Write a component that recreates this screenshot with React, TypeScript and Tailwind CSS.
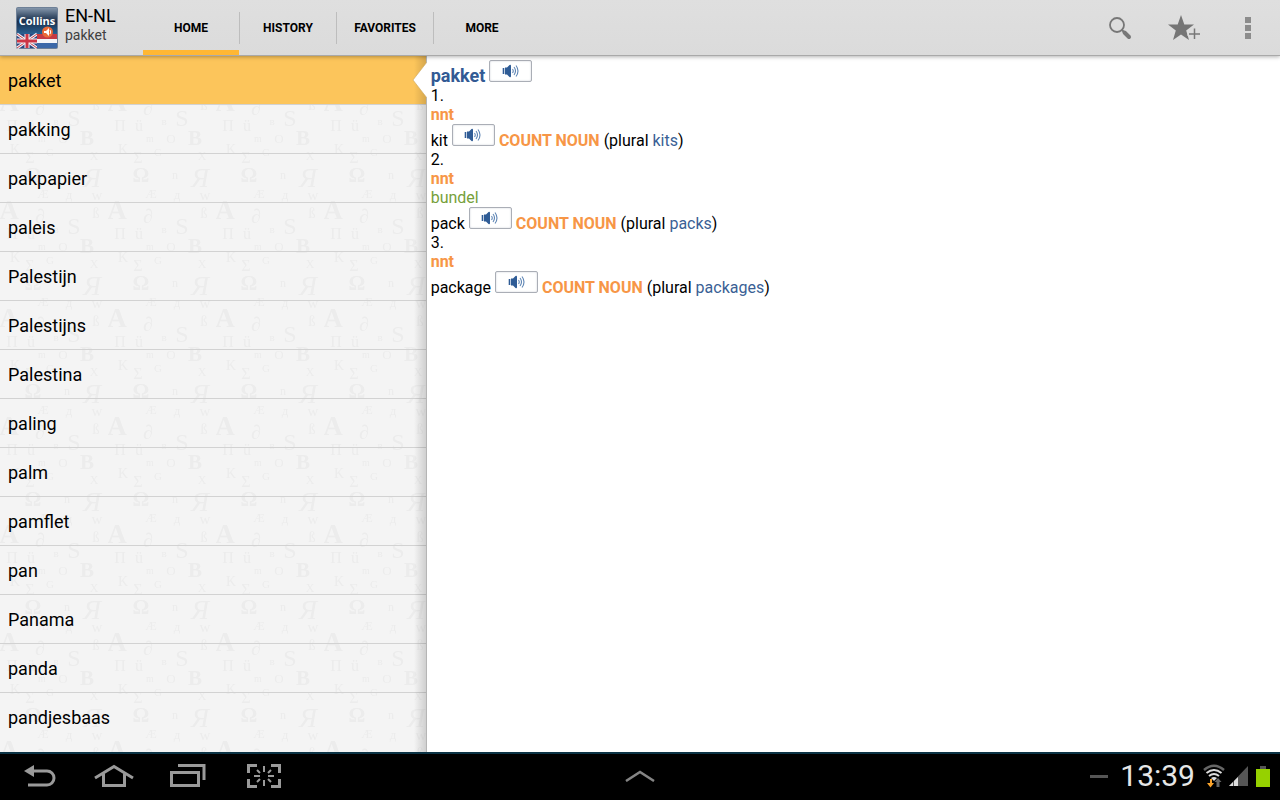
import { useState } from "react"

const tabs = ["Home", "History", "Favorites", "More"]

const words = [
  "pakket",
  "pakking",
  "pakpapier",
  "paleis",
  "Palestijn",
  "Palestijns",
  "Palestina",
  "paling",
  "palm",
  "pamflet",
  "pan",
  "Panama",
  "panda",
  "pandjesbaas",
]

const senses = [
  { hint: "", word: "kit", plural: "kits" },
  { hint: "bundel", word: "pack", plural: "packs" },
  { hint: "", word: "package", plural: "packages" },
]

// letters of the repeating 108px wallpaper tile
const letters = [
  { char: "A", x: 9, y: 55, size: 27, bold: true },
  { char: "∂", x: 40, y: 59, size: 20 },
  { char: "ß", x: 96, y: 54, size: 14 },
  { char: "S", x: 74, y: 70, size: 24 },
  { char: "в", x: 56, y: 69, size: 11 },
  { char: "Π", x: 12, y: 75, size: 16 },
  { char: "ü", x: 31, y: 75, size: 16 },
  { char: "m", x: 42, y: 86, size: 10 },
  { char: "O", x: 63, y: 87, size: 13 },
  { char: "B", x: 87, y: 89, size: 21, bold: true },
  { char: "K", x: 15, y: 98, size: 14 },
  { char: "Σ", x: 30, y: 107, size: 16 },
  { char: "G", x: 50, y: 100, size: 11 },
  { char: "X", x: 94, y: 104, size: 12 },
  { char: "Ω", x: 33, y: 18, size: 21, bold: true },
  { char: "Я", x: 92, y: 23, size: 27, italic: true },
  { char: "n", x: 67, y: 15, size: 12 },
  { char: "Æ", x: 43, y: 34, size: 13 },
  { char: "д", x: 69, y: 35, size: 13 },
  { char: "w", x: 97, y: 36, size: 15 },
]

function LetterPattern() {
  return (
    <svg className="pointer-events-none absolute inset-0 h-full w-full" aria-hidden="true">
      <defs>
        <pattern id="letters" width="108" height="108" patternUnits="userSpaceOnUse">
          {letters.map((l) => (
            <text
              key={l.char}
              x={l.x}
              y={l.y}
              fontSize={l.size}
              fontStyle={l.italic ? "italic" : "normal"}
              fontWeight={l.bold ? 700 : 400}
              fontFamily="'Liberation Serif', serif"
              textAnchor="middle"
              fill="#ececec"
            >
              {l.char}
            </text>
          ))}
        </pattern>
      </defs>
      <rect width="100%" height="100%" fill="url(#letters)" />
    </svg>
  )
}

function AppLogo() {
  return (
    <svg width="42" height="42" viewBox="0 0 42 42" role="img" aria-label="Collins">
      <defs>
        <linearGradient id="logoSky" x1="0" y1="0" x2="0" y2="1">
          <stop offset="0" stopColor="#8496ab" />
          <stop offset="0.3" stopColor="#3d526c" />
          <stop offset="0.5" stopColor="#1a304d" />
          <stop offset="1" stopColor="#2a6598" />
        </linearGradient>
      </defs>
      <rect width="42" height="42" rx="2" fill="#6e8097" />
      <rect x="1" y="1" width="40" height="27" rx="1" fill="url(#logoSky)" />
      <rect x="1" y="27" width="20" height="14" fill="#2c4580" />
      <path d="M1 27l20 14M21 27L1 41" stroke="#eef0f5" strokeWidth="3" />
      <path d="M1 27l20 14M21 27L1 41" stroke="#c8404b" strokeWidth="1" />
      <path d="M11 27v14M1 34h20" stroke="#f3f3f6" strokeWidth="5" />
      <path d="M11 27v14M1 34h20" stroke="#cc3645" strokeWidth="3" />
      <rect x="21" y="27" width="20" height="5" fill="#c63a45" />
      <rect x="21" y="32" width="20" height="4" fill="#f4f5f8" />
      <rect x="21" y="36" width="20" height="5" fill="#3c68a8" />
      <text x="21" y="18" textAnchor="middle" fontSize="11" fontWeight="700" fontFamily="'Open Sans', sans-serif" fill="#fff">
        Collins
      </text>
      <circle cx="31.500" cy="25" r="5.500" fill="#ea6a38" />
      <path d="M28 24h2l3-3v8l-3-3h-2z" fill="#fff" />
      <path d="M34 23q1.500 2 0 4" fill="none" stroke="#fff" />
    </svg>
  )
}

function SoundButton({ word }: { word: string }) {
  return (
    <button
      aria-label={`Play ${word}`}
      className="flex h-[22px] w-[43px] items-center justify-center self-start rounded-xs border border-[#aaaeb6] bg-white shadow-[inset_0_0_2px_#c8ccd4]"
    >
      <svg width="18" height="14" viewBox="0 0 18 14" fill="none" stroke="#5f86b5">
        <path d="M1.500 4v6" stroke="#2f5c96" strokeWidth="1.600" />
        <path d="M3 3.500h2L7.500 1q1.500-.8 1.500 1v10q0 1.800-1.500 1L5 10.500H3z" fill="#2f5c96" stroke="none" />
        <path d="M10.500 5q1.500 2 0 4M12 3q3 4 0 8M14 1.500q4 5.500 0 11" strokeWidth="1.100" />
      </svg>
    </button>
  )
}

function Header() {
  const [active, setActive] = useState("Home")

  return (
    <header className="relative z-10 flex h-14 items-stretch border-b border-[#a9a9a9] bg-gradient-to-b from-[#dfdfdf] to-[#dbdbdb] shadow-[0_1px_4px_rgba(0,0,0,0.3)]">
      <div className="flex w-[143px] items-start pl-4">
        <div className="pt-[7px]">
          <AppLogo />
        </div>
        <div className="pt-1 pl-[7px]">
          <h1 className="text-lg leading-6 text-black">EN-NL</h1>
          <p className="text-sm leading-[14px] text-[#404040]">pakket</p>
        </div>
      </div>

      <nav className="flex">
        {tabs.map((tab) => (
          <div key={tab} className="group flex items-center">
            <button
              onClick={() => setActive(tab)}
              className={`h-full w-24 border-b-[5px] pt-[5px] text-xs font-bold uppercase ${
                active === tab ? "border-[#ffb733]" : "border-transparent"
              }`}
            >
              {tab}
            </button>
            <span className="h-8 w-px bg-[#bdbdbd] group-last:hidden" />
          </div>
        ))}
      </nav>

      <div className="ml-auto flex items-center">
        <button aria-label="Search" className="flex w-16 justify-center">
          <svg width="24" height="24" viewBox="0 0 24 24" fill="none" stroke="#777">
            <circle cx="9" cy="9" r="7" strokeWidth="1.800" />
            <path d="M13.500 13.500l3 3" strokeWidth="2" />
            <path d="M16.500 16.500l4.500 4.500" strokeWidth="4" strokeLinecap="round" />
          </svg>
        </button>
        <button aria-label="Add to favorites" className="flex w-16 justify-center">
          <svg width="32" height="26" viewBox="0 0 32 26">
            <path d="M13 0l3.300 9.600H26l-7.800 6 2.800 9.400-8-5.600L5 25l2.800-9.400L0 9.600h9.700z" fill="#757575" />
            <path d="M26 12v13M19.500 19h12.500" stroke="#dcdcdc" strokeWidth="3.500" />
            <path d="M26.500 13.500v10.500M21 19h11" stroke="#777" strokeWidth="1.500" />
          </svg>
        </button>
        <button aria-label="More options" className="flex w-16 justify-center">
          <svg width="6" height="22" viewBox="0 0 6 22" fill="#8c8c8c">
            <path d="M0 0h6v6H0zM0 8h6v6H0zM0 16h6v6H0z" />
          </svg>
        </button>
      </div>
    </header>
  )
}

function WordList({ selected, onSelect }: { selected: string; onSelect: (w: string) => void }) {
  return (
    <aside className="relative w-1/3 shrink-0 border-r border-[#b5b5b5] bg-[#f4f4f4]">
      <LetterPattern />
      <ul className="relative">
        {words.map((word) => (
          <li
            key={word}
            className={`relative border-b border-[#d2d2d2] last:border-transparent ${
              word === selected ? "bg-[#fcc55b]" : ""
            }`}
          >
            <button
              onClick={() => onSelect(word)}
              className="block h-12 w-full px-2 pt-0.5 text-left text-lg text-black"
            >
              {word}
            </button>
          </li>
        ))}
      </ul>
      <div className="pointer-events-none absolute inset-y-0 right-0 w-3 bg-gradient-to-r from-transparent to-black/15" />
      {/* pointer towards the article */}
      <svg className="absolute top-[6px] -right-px" width="15" height="36" viewBox="0 0 15 36" aria-hidden="true">
        <path d="M15 0L1 18l14 18z" fill="#fff" />
        <path d="M15 0L1 18l14 18" fill="none" stroke="#c9a662" strokeWidth="0.600" />
      </svg>
    </aside>
  )
}

function Article() {
  return (
    <main className="grow bg-white p-1 text-base leading-[19px] text-black">
      <div className="flex h-[26px] items-end gap-1">
        <h2 className="text-lg leading-5 font-bold text-[#325a94]">pakket</h2>
        <SoundButton word="pakket" />
      </div>
      {senses.map((sense, i) => (
        <section key={sense.word}>
          <p>{i + 1}.</p>
          <p className="font-bold text-[#f79646]">nnt</p>
          {sense.hint && <p className="text-[#76a03a]">{sense.hint}</p>}
          <div className="flex h-[26px] items-end gap-1">
            <span>{sense.word}</span>
            <SoundButton word={sense.word} />
            <span className="font-bold text-[#f79646]">COUNT NOUN</span>
            <span>
              (plural{" "}
              <a href="#" className="text-[#3a5f95]">
                {sense.plural}
              </a>
              )
            </span>
          </div>
        </section>
      ))}
    </main>
  )
}

function SystemBar() {
  return (
    <footer className="grid h-12 grid-cols-3 items-center border-t-2 border-[#0b3345] bg-black pb-0.5">
      <div className="flex items-center">
        <button aria-label="Back" className="flex w-20 justify-center">
          <svg width="32" height="22" viewBox="0 0 32 22" fill="none" stroke="#9a9a9a" strokeWidth="3">
            <path d="M7 6h16a7 7 0 0 1 0 14H4" />
            <path d="M0 6l10-6v12z" fill="#9a9a9a" stroke="none" />
          </svg>
        </button>
        <button aria-label="Home screen" className="flex w-[68px] justify-center">
          <svg width="40" height="24" viewBox="0 0 40 24" fill="none" stroke="#9a9a9a" strokeWidth="3">
            <path d="M1 14L20 2.500 39 14" />
            <path d="M9.500 9.500v12h21v-12" />
          </svg>
        </button>
        <button aria-label="Recent apps" className="flex w-20 justify-center">
          <svg width="36" height="24" viewBox="0 0 36 24" fill="none" stroke="#9a9a9a" strokeWidth="3">
            <path d="M8 1.500h26V16" />
            <rect x="1.500" y="8.500" width="27" height="13" />
          </svg>
        </button>
        <button aria-label="Screenshot" className="flex w-[72px] justify-center">
          <svg width="34" height="24" viewBox="0 0 34 24" fill="none" stroke="#9a9a9a" strokeWidth="3">
            <path d="M10 1.500H1.500V9M24 1.500h8.500V9M10 22.500H1.500V15M24 22.500h8.500V15" />
            <path
              d="M17 2v6M17 16v6M7 12h6M21 12h6M10 6l3 3M24 6l-3 3M10 18l3-3M24 18l-3-3"
              strokeWidth="2"
            />
          </svg>
        </button>
      </div>

      <button aria-label="Open tray" className="justify-self-center">
        <svg width="30" height="12" viewBox="0 0 30 12" fill="none" stroke="#858585" strokeWidth="2.500">
          <path d="M1 11l14-9 14 9" />
        </svg>
      </button>

      <div className="flex items-center justify-end gap-2 pr-[10px]">
        <span className="h-[3px] w-[18px] bg-[#555]" />
        <time className="pl-1 text-3xl leading-8 text-[#e6e6e6]">13:39</time>
        <div className="flex items-center gap-1">
          <svg width="22" height="24" viewBox="0 0 22 24" fill="none" aria-label="Wi-Fi">
            <path d="M1 6q10-8.500 20 0" stroke="#666" strokeWidth="2.500" />
            <path d="M3.500 9q7.500-6 15 0M6 12q5-4 10 0" stroke="#ddd" strokeWidth="2" />
            <path d="M8 14q3-2 6 0l-3 3z" fill="#ddd" />
            <path d="M9 15v4h2l-3.500 4.500L4 19h3v-4z" fill="#f9a32b" />
            <path d="M13.500 23v-5h-2l3.500-4 3.500 4h-2v5z" fill="#666" />
          </svg>
          <svg width="19" height="20" viewBox="0 0 19 20" aria-label="Signal">
            <path d="M0 20L19 0v20z" fill="#555" />
            <path d="M0 20l4-4v4zM5 20v-5l4-4v9z" fill="#ddd" />
          </svg>
          <svg className="ml-1" width="14" height="21" viewBox="0 0 14 21" aria-label="Battery">
            <path d="M4 0h6v3H4z" fill="#555" />
            <path d="M0 3h14v18H0z" fill="#96d100" />
          </svg>
        </div>
      </div>
    </footer>
  )
}

export default function App() {
  const [selected, setSelected] = useState("pakket")

  return (
    <div className="flex min-h-screen flex-col bg-white font-['Roboto',sans-serif]">
      <Header />
      <div className="flex grow">
        <WordList selected={selected} onSelect={setSelected} />
        <Article />
      </div>
      <SystemBar />
    </div>
  )
}
